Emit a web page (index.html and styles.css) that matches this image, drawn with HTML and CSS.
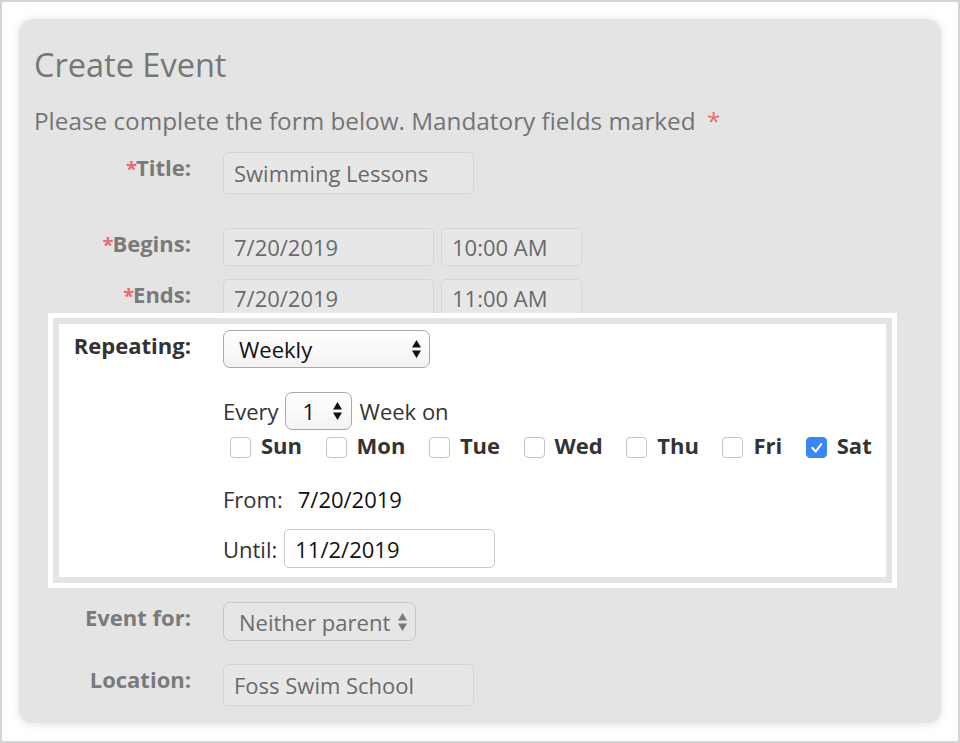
FILE: index.html
```html
<!DOCTYPE html>
<html>
<head>
<meta charset="utf-8">
<title>Create Event</title>
<link rel="stylesheet" href="styles.css">
</head>
<body>
<div class="frame">
  <div class="card">
    <h1 class="title">Create Event</h1>
    <p class="intro">Please complete the form below. Mandatory fields marked <span class="req req-intro">*</span></p>

    <div class="row row-title">
      <div class="label"><span class="req req-label">*</span>Title:</div>
      <div class="field"><div class="input w-wide">Swimming Lessons</div></div>
    </div>

    <div class="row row-begins">
      <div class="label"><span class="req req-label">*</span>Begins:</div>
      <div class="field">
        <div class="input w-date">7/20/2019</div>
        <div class="input w-time">10:00 AM</div>
      </div>
    </div>

    <div class="row row-ends">
      <div class="label"><span class="req req-label">*</span>Ends:</div>
      <div class="field">
        <div class="input w-date">7/20/2019</div>
        <div class="input w-time">11:00 AM</div>
      </div>
    </div>

    <div class="spot">
      <div class="spot-inner">
        <div class="row">
          <div class="label">Repeating:</div>
          <div class="stack">
            <div class="select sel-weekly"><span>Weekly</span>
              <svg width="9" height="18" viewBox="0 0 9 18"><path d="M4.5 0L9 7.5H0z M0 10.5h9L4.5 18z" fill="#111"/></svg>
            </div>
            <div class="every">
              <span class="txt">Every</span>
              <div class="select sel-num"><span>1</span>
                <svg width="9" height="18" viewBox="0 0 9 18"><path d="M4.5 0L9 7.5H0z M0 10.5h9L4.5 18z" fill="#111"/></svg>
              </div>
              <span class="txt week">Week on</span>
            </div>
            <div class="days">
              <div class="day"><span class="cb"></span><span class="dname">Sun</span></div>
              <div class="day"><span class="cb"></span><span class="dname">Mon</span></div>
              <div class="day"><span class="cb"></span><span class="dname">Tue</span></div>
              <div class="day"><span class="cb"></span><span class="dname">Wed</span></div>
              <div class="day"><span class="cb"></span><span class="dname">Thu</span></div>
              <div class="day"><span class="cb"></span><span class="dname">Fri</span></div>
              <div class="day"><span class="cb on"><svg width="19" height="19" viewBox="0 0 19 19"><path d="M5.3 9.8l3.4 3.8 5.6-7.6" fill="none" stroke="#fff" stroke-width="2.1" stroke-linecap="round" stroke-linejoin="round"/></svg></span><span class="dname">Sat</span></div>
            </div>
            <div class="from"><span class="txt">From:</span><span class="from-val">7/20/2019</span></div>
            <div class="until"><span class="txt">Until:</span><div class="input input-live w-until">11/2/2019</div></div>
          </div>
        </div>
      </div>
    </div>

    <div class="row row-eventfor">
      <div class="label">Event for:</div>
      <div class="field">
        <div class="select select-dim sel-parent"><span>Neither parent</span>
          <svg width="9" height="18" viewBox="0 0 9 18"><path d="M4.5 0L9 7.5H0z M0 10.5h9L4.5 18z" fill="#7a7a7a"/></svg>
        </div>
      </div>
    </div>

    <div class="row row-location">
      <div class="label">Location:</div>
      <div class="field"><div class="input w-wide">Foss Swim School</div></div>
    </div>
  </div>
</div>
</body>
</html>
```

FILE: styles.css
```css
* { box-sizing: border-box; }

body {
  margin: 0;
  background: #ffffff;
  font-family: "Open Sans", "Noto Sans", sans-serif;
}

.frame {
  width: 960px;
  height: 743px;
  border: 2px solid #d3d3d3;
  padding: 17px 17px 0 17px;
  background: #ffffff;
}

.card {
  background: #e4e4e4;
  border-radius: 14px;
  box-shadow: 0 1px 9px rgba(0, 0, 0, 0.13);
  padding: 26px 15px 17px 15px;
}

.title {
  margin: 0;
  font-size: 32.5px;
  line-height: 40px;
  font-weight: 400;
  color: #767676;
}

.intro {
  margin: 21px 0 0;
  font-size: 24.3px;
  line-height: 30px;
  color: #747474;
}

.req { color: #e76c6e; }
.req-intro { margin-left: 5px; }
.req-label {
  font-size: 20px;
  letter-spacing: -1px;
}

.row {
  display: flex;
  align-items: flex-start;
}

.label {
  flex: none;
  width: 157px;
  margin-right: 32px;
  text-align: right;
  font-size: 22px;
  line-height: 30px;
  font-weight: 700;
  color: #7a7a7a;
}

.row-title { margin-top: 16px; }
.row-begins { margin-top: 34px; }
.row-ends { margin-top: 13px; }
.row-eventfor { margin-top: 14px; }
.row-location { margin-top: 23px; }

.field {
  display: flex;
  gap: 7px;
}

.input {
  display: flex;
  align-items: center;
  height: 38px;
  padding: 0 10px;
  border: 1px solid #d5d5d5;
  border-radius: 5px;
  background: #e7e7e7;
  font-size: 22px;
  color: #6a6a6a;
  white-space: nowrap;
}

.w-wide { width: 251px; height: 42px; }
.w-date { width: 211px; }
.w-time { width: 141px; }

/* highlighted section */
.spot {
  position: relative;
  z-index: 1;
  margin: -4px 29px 0 14px;
  padding: 5px;
  background: #ffffff;
}

.spot-inner {
  border: 6px solid #e4e4e4;
  background: #ffffff;
  padding: 6px 0 9px;
}

.spot .label {
  width: 132px;
  color: #333333;
}

.stack {
  display: flex;
  flex-direction: column;
  align-items: flex-start;
}

.select {
  display: flex;
  align-items: center;
  justify-content: space-between;
  height: 38px;
  padding: 0 8px 0 15px;
  border: 1px solid #a9a9a9;
  border-radius: 7px;
  background: linear-gradient(#ffffff, #f3f3f3);
  font-size: 22px;
  color: #111111;
  white-space: nowrap;
}

.select svg { flex: none; }

.sel-weekly { width: 207px; }

.sel-num {
  width: 67px;
  margin-left: 6px;
  padding: 0 9px 0 17px;
}

.every {
  display: flex;
  align-items: center;
  height: 38px;
  margin-top: 24px;
}

.txt {
  font-size: 22px;
  line-height: 30px;
  color: #333333;
}

.week { margin-left: 8px; }

.days {
  display: flex;
  height: 30px;
  margin-left: 7px;
}

.day {
  display: flex;
  align-items: flex-start;
  gap: 10px;
  margin-right: 23.5px;
}

.cb {
  display: flex;
  align-items: center;
  justify-content: center;
  width: 21px;
  height: 21px;
  margin-top: 7px;
  border: 1px solid #c3c3c3;
  border-radius: 4px;
  background: #ffffff;
}

.cb.on {
  background: #3b86f6;
  border-color: #3b86f6;
}

.dname {
  font-size: 22px;
  line-height: 30px;
  font-weight: 700;
  color: #333333;
}

.from {
  display: flex;
  margin-top: 24px;
}

.from-val {
  margin-left: 15px;
  font-size: 22px;
  line-height: 30px;
  color: #111111;
}

.until {
  display: flex;
  align-items: center;
  margin-top: 15px;
}

.input-live {
  margin-left: 7px;
  background: #ffffff;
  border-color: #cacaca;
  color: #111111;
}

.w-until { width: 211px; height: 39px; }

.select-dim {
  border-color: #c7c7c7;
  background: #e6e6e6;
  color: #6c6c6c;
}

.sel-parent { width: 193px; height: 39px; }
```
